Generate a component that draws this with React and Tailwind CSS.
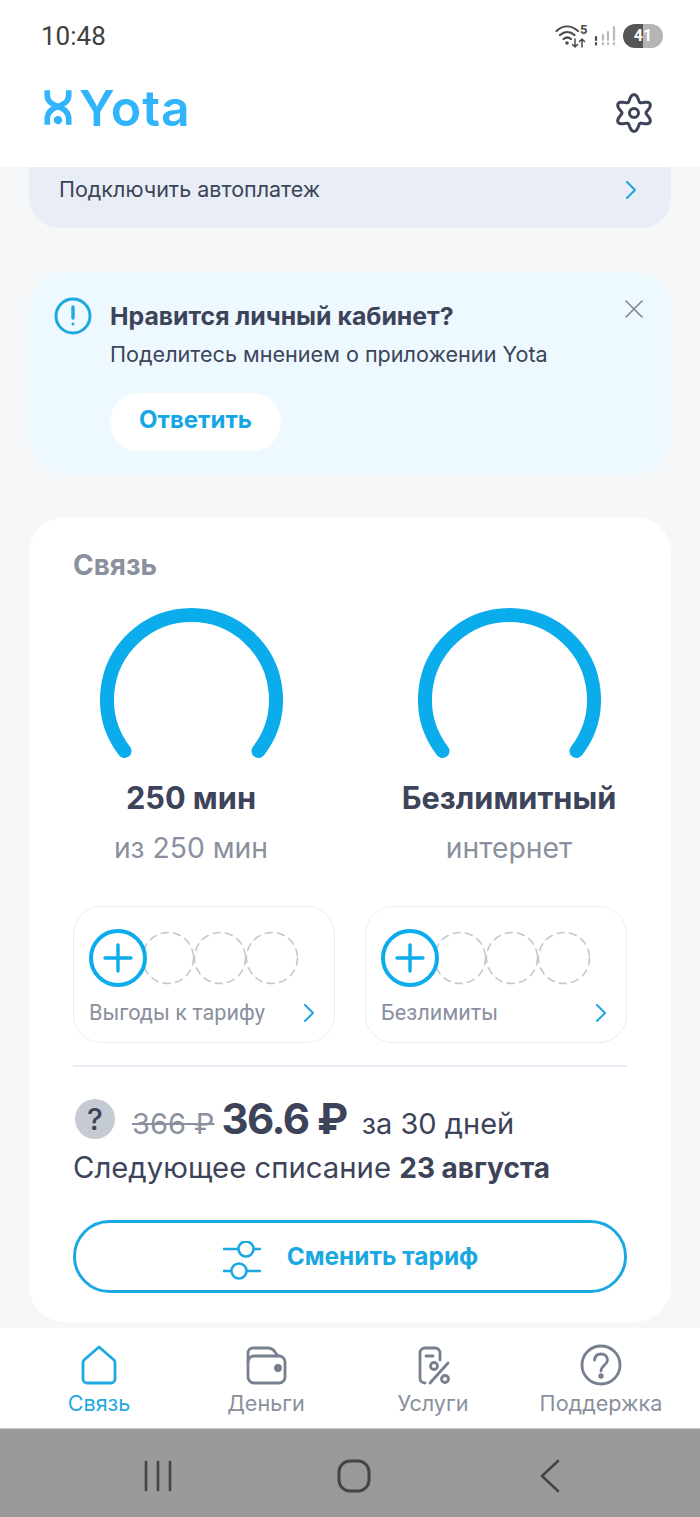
import React from 'react';

const gearPoints = Array.from({ length: 120 }, (_, i) => {
  const a = (i / 120) * Math.PI * 2;
  const r = 15.2 + 3.2 * Math.cos(6 * a);
  return `${(20 + r * Math.sin(a)).toFixed(2)},${(20 - r * Math.cos(a)).toFixed(2)}`;
}).join(' ');

const Chevron = ({ className = '' }) => (
  <svg className={className} width="12" height="20" viewBox="0 0 12 20" fill="none" stroke="#1fa5de" strokeWidth="2" strokeLinecap="round" strokeLinejoin="round">
    <path d="M2 2l8 8-8 8" />
  </svg>
);

const Gauge = () => (
  <svg width="183" height="150" viewBox="0 0 183 150" fill="none">
    <path d="M24.5 143A84.5 84.5 0 1 1 158.5 143" stroke="#0bacec" strokeWidth="14" strokeLinecap="round" />
  </svg>
);

const DashedCircle = ({ className = '' }) => (
  <svg className={className} width="54" height="54" viewBox="0 0 54 54" fill="none" stroke="#c4c7ce" strokeWidth="1.600" strokeLinecap="round" strokeDasharray="7 5.500">
    <circle cx="27" cy="27" r="25.500" />
  </svg>
);

const Tile = ({ label }) => (
  <div className="h-[137px] rounded-[28px] border border-[#e9edf5] pl-[15px] pr-[19px] pt-[22px]">
    <div className="flex items-center">
      <div className="z-10 flex h-[58px] w-[58px] items-center justify-center rounded-full border-[4px] border-[#0bacec] bg-white">
        <svg width="30" height="30" viewBox="0 0 30 30" stroke="#0bacec" strokeWidth="3.400" strokeLinecap="round">
          <path d="M15 2v26M2 15h26" />
        </svg>
      </div>
      <DashedCircle className="-ml-[6px]" />
      <DashedCircle className="-ml-[2px]" />
      <DashedCircle className="-ml-[2px]" />
    </div>
    <div className="mt-[10px] flex items-center justify-between font-['Roboto'] text-[21.7px] leading-[32px] text-[#8a909e]">
      <span>{label}</span>
      <Chevron />
    </div>
  </div>
);

const navItems = [
  {
    label: 'Связь',
    active: true,
    icon: <path d="M21 3L6 16c-.7.7-1 1.500-1 2.500V35c0 2.200 1.800 4 4 4h24c2.200 0 4-1.800 4-4V18.500c0-1-.3-1.800-1-2.500L21 3z" />,
  },
  {
    label: 'Деньги',
    icon: (
      <>
        <path d="M3 18V9c0-3 2-5 5-5h15c3 0 5 1 7 4l3 4" />
        <rect x="3" y="12" width="37" height="27" rx="6" />
        <circle cx="33" cy="24" r="2.500" fill="#76808f" />
      </>
    ),
  },
  {
    label: 'Услуги',
    icon: (
      <>
        <path d="M13 39c-3 0-5-2-5-5V9c0-3 2-5 5-5h10c3 0 5 2 5 5v7" />
        <path d="M14 12h7M18 39L36 19" />
        <circle cx="22" cy="22" r="3.500" />
        <circle cx="33" cy="35" r="3.500" />
      </>
    ),
  },
  {
    label: 'Поддержка',
    icon: (
      <>
        <circle cx="21" cy="21" r="19" />
        <path d="M14.500 16c.5-4 3-6 6.500-6 4 0 6.500 2.500 6.500 6 0 5-6.500 5.500-6.500 11" />
        <circle cx="21" cy="32" r="1.300" fill="#76808f" />
      </>
    ),
  },
];

export default function App() {
  return (
    <div className="flex h-[1517px] w-[700px] flex-col overflow-hidden bg-[#f6f7f9] font-['Inter',sans-serif] text-[#3d4459]">
      {/* status bar + header */}
      <div className="h-[167px] shrink-0 bg-white">
        <div className="flex h-[72px] items-center justify-between pl-[41px] pr-[37px]">
          <span className="font-['Roboto'] text-[26px] leading-none text-[#404040]">10:48</span>
          <div className="flex items-center">
            <svg width="34" height="28" viewBox="0 0 34 28" fill="none" stroke="#4a4a4a" strokeWidth="2.200" strokeLinecap="round">
              <path d="M1.500 9C8 3 16 3 23 9M5 13c4.500-4 10-4 14.500 0M8.500 17c2.500-2 5-2 7.500 0" />
              <circle cx="12" cy="21" r="1.800" fill="#4a4a4a" stroke="none" />
              <path strokeWidth="1.500" d="M20 17v8m-2.500-2.500L20 25l2.500-2.500M27 25v-8m-2.500 2.500L27 17l2.500 2.500" />
              <text x="25" y="12" fontSize="13" fontWeight="700" fill="#4a4a4a" stroke="none" fontFamily="Roboto">5</text>
            </svg>
            <svg className="ml-[4px]" width="24" height="24" viewBox="0 0 24 24" strokeLinecap="round" strokeWidth="2.200" stroke="#b9b9b9">
              <path d="M15 8v8M21 3v13M10 11v5" />
              <path stroke="#4a4a4a" d="M3 13v3" />
              <path stroke="#4a4a4a" strokeDasharray="1.500 2.500" d="M3 19v4" />
              <path strokeDasharray="1.500 2.500" d="M10 19v4M15 19v4M21 19v4" />
            </svg>
            <div className="ml-[6px] flex h-[24px] w-[40px] items-center justify-center rounded-full bg-[linear-gradient(90deg,#555_50%,#b5b5b5_50%)] font-['Roboto'] text-[16px] font-bold text-white">
              41
            </div>
          </div>
        </div>
        <div className="flex items-center justify-between pl-[44px] pr-[46px] pt-[11px]">
          <div className="mb-[10px] flex items-center">
            <svg width="28" height="38" viewBox="0 0 30 38" fill="none" stroke="#30b4fb" strokeWidth="6">
              <path d="M3.500 0v5c0 8 6 10 11.500 12.500C20.500 15 26.500 13 26.500 5V0" />
              <path d="M3.500 37v-6c0-7 5-11.500 11.500-13.500C21.500 19.500 26.500 24 26.500 31v6" />
              <circle cx="15" cy="32" r="4.500" fill="#30b4fb" stroke="none" />
            </svg>
            <span className="ml-[7px] text-[50px] font-semibold leading-none tracking-[1px] text-[#30b4fb]">Yota</span>
          </div>
          <svg width="40" height="40" viewBox="0 0 40 40" fill="none" stroke="#3d4459" strokeWidth="3">
            <polygon points={gearPoints} strokeLinejoin="round" />
            <circle cx="20" cy="20" r="4.500" />
          </svg>
        </div>
      </div>

      {/* scroll area */}
      <div className="flex-1 overflow-hidden px-[29px]">
        <div className="flex h-[61px] items-center justify-between rounded-b-[30px] bg-[#e9edf5] pb-[15px] pl-[30px] pr-[34px]">
          <span className="text-[21.5px] leading-none">Подключить автоплатеж</span>
          <Chevron />
        </div>

        <div className="relative mt-[44px] flex h-[202px] rounded-[36px] bg-[#eef9ff] pl-[25px] pt-[25px]">
          <svg className="shrink-0" width="38" height="38" viewBox="0 0 38 38" fill="none" stroke="#1fa8e2" strokeWidth="3" strokeLinecap="round">
            <circle cx="19" cy="19" r="17" />
            <path d="M19 10v11" strokeWidth="3.400" />
            <circle cx="19" cy="27" r="1.500" fill="#1fa8e2" stroke="none" />
          </svg>
          <div className="ml-[18px]">
            <div className="text-[24.800px] font-bold leading-[38px]">Нравится личный кабинет?</div>
            <div className="text-[21.600px] leading-[38px]">Поделитесь мнением о приложении Yota</div>
            <div className="mt-[20px] flex h-[58px] w-[171px] items-center justify-center rounded-full bg-white pb-[4px] text-[24px] font-bold text-[#14a7e4]">
              Ответить
            </div>
          </div>
          <svg className="absolute right-[28px] top-[28px]" width="18" height="18" viewBox="0 0 18 18" stroke="#7d8592" strokeWidth="1.600" strokeLinecap="round">
            <path d="M1 1l16 16M17 1L1 17" />
          </svg>
        </div>

        <div className="mt-[43px] h-[805px] rounded-[36px] bg-white px-[44px] pt-[30px]">
          <div className="text-[28px] font-bold leading-[36px] text-[#8a909e]">Связь</div>
          <div className="-mx-[41px] mt-[25px] grid grid-cols-2 text-center">
            {[
              ['250 мин', 'из 250 мин'],
              ['Безлимитный', 'интернет'],
            ].map(([title, sub]) => (
              <div key={title} className="flex flex-col items-center">
                <Gauge />
                <div className="mt-[20px] text-[30.700px] font-bold leading-[40px]">{title}</div>
                <div className="mt-[10px] text-[28.300px] leading-[40px] text-[#8a909e]">{sub}</div>
              </div>
            ))}
          </div>

          <div className="mt-[38px] grid grid-cols-2 gap-[30px]">
            <Tile label="Выгоды к тарифу" />
            <Tile label="Безлимиты" />
          </div>

          <div className="mt-[22px] h-[2px] bg-[#e9edf5]" />

          <div className="mt-[27px] flex items-center">
            <div className="ml-[2px] flex h-[40px] w-[40px] items-center justify-center rounded-full bg-[#c5cad3] text-[30px] font-medium leading-none">?</div>
            <span className="ml-[17px] mt-[10px] text-[29px] leading-[40px] text-[#8a909e] line-through">366 ₽</span>
            <span className="ml-[7px] text-[42px] font-bold leading-none tracking-[-1.500px]">36.6 ₽</span>
            <span className="ml-[15px] mt-[10px] text-[29px] leading-[40px]">за 30 дней</span>
          </div>
          <div className="mt-[4px] text-[29.300px] leading-[40px]">
            Следующее списание <span className="text-[28px] font-bold">23 августа</span>
          </div>

          <div className="mt-[32px] flex h-[73px] items-center justify-center rounded-full border-[3px] border-[#1aa8e2]">
            <svg className="mt-[8px]" width="40" height="40" viewBox="0 0 40 40" fill="none" stroke="#1aa8e2" strokeWidth="2.600">
              <path d="M1 8h15M32 8h7M1 30h9M25 30h14" />
              <circle cx="24" cy="8" r="7.500" />
              <circle cx="17" cy="30" r="7.500" />
            </svg>
            <span className="ml-[25px] text-[24.400px] font-bold text-[#1aa8e2]">Сменить тариф</span>
          </div>
        </div>
      </div>

      {/* bottom nav */}
      <div className="grid h-[101px] shrink-0 grid-cols-[198px_136px_198px_138px] border-b border-[#c9c9c9] bg-white pt-[16px]">
        {navItems.map((item) => (
          <div key={item.label} className="flex flex-col items-center">
            <svg width="42" height="42" viewBox="0 0 42 42" fill="none" stroke={item.active ? '#1fa8e2' : '#76808f'} strokeWidth="2.800" strokeLinecap="round" strokeLinejoin="round">
              {item.icon}
            </svg>
            <span className={`mt-[2px] text-[21.600px] leading-[30px] ${item.active ? 'text-[#1fa8e2]' : 'text-[#8a909e]'}`}>{item.label}</span>
          </div>
        ))}
      </div>

      {/* android nav */}
      <div className="grid h-[88px] shrink-0 grid-cols-[316px_70px_1fr] bg-[#999999] pt-[30px]">
        <svg className="ml-[142px]" width="32" height="34" viewBox="0 0 32 34" stroke="#444" strokeWidth="2.600" strokeLinecap="round">
          <path d="M4 3v28M16 3v28M28 3v28" />
        </svg>
        <svg className="ml-[20px]" width="36" height="34" viewBox="0 0 36 34" fill="none" stroke="#444" strokeWidth="3">
          <rect x="3" y="2" width="30" height="30" rx="11" />
        </svg>
        <svg className="ml-[152px]" width="24" height="34" viewBox="0 0 24 34" fill="none" stroke="#444" strokeWidth="2.600" strokeLinecap="round" strokeLinejoin="round">
          <path d="M20 2L4 17l16 15" />
        </svg>
      </div>
    </div>
  );
}
